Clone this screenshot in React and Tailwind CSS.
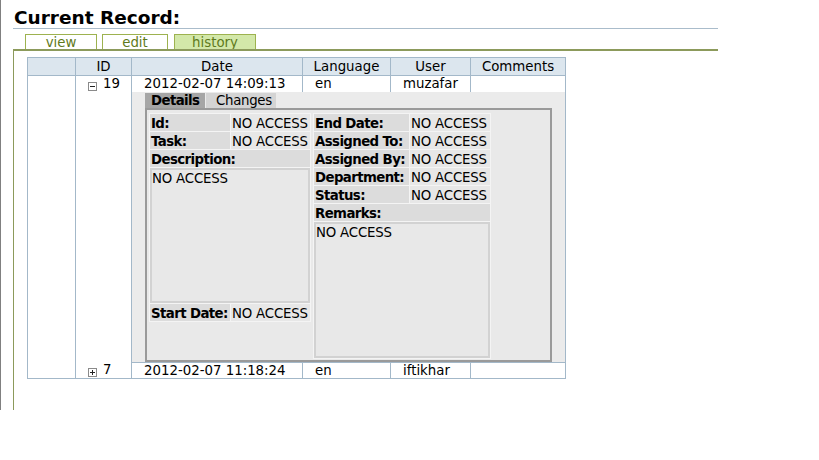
import React from "react";

const Box = ({ plus }) => (
  <svg width="9" height="9" viewBox="0 0 9 9" className="shrink-0">
    <rect x="0.5" y="0.5" width="8" height="8" fill="white" stroke="#8a8a8a" />
    <path d="M2 4.5h5" stroke="#222" />
    {plus && <path d="M4.5 2v5" stroke="#222" />}
  </svg>
);

const Tab = ({ children, className }) => (
  <div
    className={
      "h-[15px] border-t border-l border-r border-[#9db24f] text-[#5f7a1c] text-center leading-[15px] " +
      className
    }
  >
    {children}
  </div>
);

const LRow = ({ label, w }) => (
  <div className="flex gap-px h-[17px] leading-[17px] whitespace-nowrap">
    <div className={"bg-[#dcdcdc] font-bold tracking-[-0.6px] pl-px pt-px overflow-hidden " + w}>{label}</div>
    <div className="flex-1 bg-[#e7e7e7] pl-px pt-px overflow-hidden tracking-[-0.2px]">NO ACCESS</div>
  </div>
);

export default function App() {
  const bc = "border-[#a3b8c9]";
  return (
    <div className="w-[819px] h-[460px] bg-white text-black font-['DejaVu_Sans',sans-serif] text-[13.33px] leading-[16px]">
      <div className="w-[718px] h-[410px] border-l border-[#808080] pl-[12px] flex flex-col">
        <div className="h-[29px] border-b border-[#aabccb] pt-[7px]">
          <h1 className="text-[18.5px] font-bold leading-[21px] pl-px">Current Record:</h1>
        </div>
        <div className="flex mt-[5px] pl-[12px]">
          <Tab className="w-[72px] bg-white">view</Tab>
          <Tab className="w-[66px] ml-[5px] bg-white">edit</Tab>
          <Tab className="w-[82px] ml-[6px] bg-[#d3e8a9]">history</Tab>
        </div>
        <div className="flex-1 border-t-2 border-l border-[#8c9a5b] pt-[6px] pl-[13px]">
          <div className={"w-[539px] border " + bc + " grid grid-cols-[47px_56px_171px_88px_80px_95px] grid-rows-[18px_16px_270px_16px]"}>
            {/* header */}
            <div className={"col-start-1 row-start-1 bg-[#dce6ee] border-b " + bc}></div>
            <div className={"col-start-2 row-start-1 bg-[#dce6ee] border-b border-l text-center leading-[17px] " + bc}>ID</div>
            <div className={"col-start-3 row-start-1 bg-[#dce6ee] border-b border-l text-center leading-[17px] " + bc}>Date</div>
            <div className={"col-start-4 row-start-1 bg-[#dce6ee] border-b border-l text-center leading-[17px] " + bc}>Language</div>
            <div className={"col-start-5 row-start-1 bg-[#dce6ee] border-b border-l text-center leading-[17px] " + bc}>User</div>
            <div className={"col-start-6 row-start-1 bg-[#dce6ee] border-b border-l text-center leading-[17px] " + bc}>Comments</div>

            {/* blank first column */}
            <div className="col-start-1 row-start-2 row-span-3 bg-white"></div>

            {/* ID for row 1 */}
            <div className={"col-start-2 row-start-2 row-span-2 border-l pl-[12px] flex items-start leading-[15px] " + bc}>
              <div className="mt-[6px]"><Box /></div>
              <span className="ml-[6px]">19</span>
            </div>
            <div className={"col-start-3 row-start-2 border-l pl-[12px] leading-[15px] whitespace-nowrap " + bc}>2012-02-07 14:09:13</div>
            <div className={"col-start-4 row-start-2 border-l pl-[12px] leading-[15px] " + bc}>en</div>
            <div className={"col-start-5 row-start-2 border-l pl-[12px] leading-[15px] " + bc}>muzafar</div>
            <div className={"col-start-6 row-start-2 border-l " + bc}></div>

            {/* detail panel */}
            <div className={"col-start-3 col-span-4 row-start-3 border-l bg-[#ebebeb] pl-[13px] pt-px " + bc}>
              <div className="flex h-[15px] leading-[16px]">
                <div className="w-[60px] bg-[#a6a6a6] font-bold tracking-[-0.6px] pl-[6px]">Details</div>
                <div className="w-[70px] ml-px bg-[#d4d4d4] pl-[10px] tracking-[-0.3px]">Changes</div>
              </div>
              <div className="w-[407px] h-[254px] border-2 border-[#9a9a9a] bg-[#e9e9e9] flex items-start gap-[2px] pl-[2px] pt-[3px]">
                {/* left */}
                <div className="w-[162px] bg-[#f4f4f4] p-px flex flex-col gap-px">
                  <LRow label="Id:" w="w-[80px]" />
                  <LRow label="Task:" w="w-[80px]" />
                  <div className="h-[17px] leading-[17px] pt-px bg-[#dcdcdc] font-bold tracking-[-0.6px] pl-px overflow-hidden">Description:</div>
                  <div className="h-[135px] bg-[#e8e8e8] border-2 border-[#d2d2d2] leading-[17px] tracking-[-0.2px]">NO ACCESS</div>
                  <LRow label="Start Date:" w="w-[80px]" />
                </div>
                {/* right */}
                <div className="w-[178px] bg-[#f4f4f4] p-px flex flex-col gap-px">
                  <LRow label="End Date:" w="w-[95px]" />
                  <LRow label="Assigned To:" w="w-[95px]" />
                  <LRow label="Assigned By:" w="w-[95px]" />
                  <LRow label="Department:" w="w-[95px]" />
                  <LRow label="Status:" w="w-[95px]" />
                  <div className="h-[17px] leading-[17px] pt-px bg-[#dcdcdc] font-bold tracking-[-0.6px] pl-px overflow-hidden">Remarks:</div>
                  <div className="h-[136px] bg-[#e8e8e8] border-2 border-[#d2d2d2] leading-[17px] tracking-[-0.2px]">NO ACCESS</div>
                </div>
              </div>
            </div>

            {/* row 2 */}
            <div className={"col-start-2 row-start-4 border-l pl-[12px] flex items-start leading-[15px] " + bc}>
              <div className="mt-[6px]"><Box plus /></div>
              <span className="ml-[6px]">7</span>
            </div>
            <div className={"col-start-3 row-start-4 border-l border-t pl-[12px] leading-[15px] whitespace-nowrap " + bc}>2012-02-07 11:18:24</div>
            <div className={"col-start-4 row-start-4 border-l border-t pl-[12px] leading-[15px] " + bc}>en</div>
            <div className={"col-start-5 row-start-4 border-l border-t pl-[12px] leading-[15px] " + bc}>iftikhar</div>
            <div className={"col-start-6 row-start-4 border-l border-t " + bc}></div>
          </div>
        </div>
      </div>
    </div>
  );
}
